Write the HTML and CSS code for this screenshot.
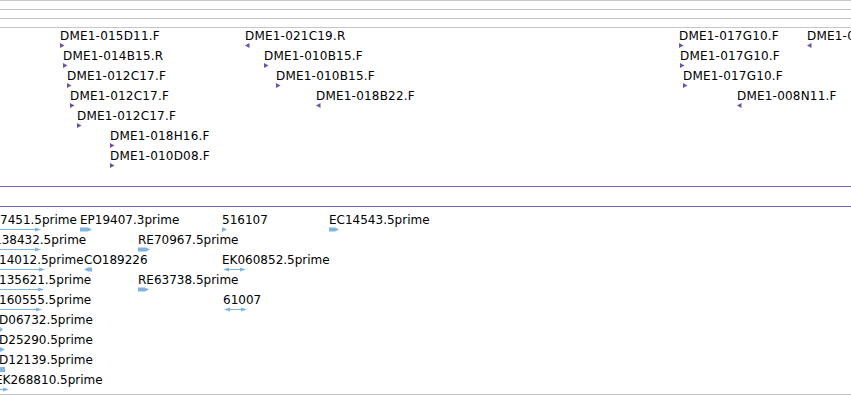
FILE: index.html
```html
<!DOCTYPE html>
<html lang="en">
<head>
    <meta charset="UTF-8">
    <meta name="viewport" content="width=device-width, initial-scale=1.0">
    <title>Feature Tracks</title>
    <link rel="stylesheet" href="styles.css">
</head>
<body>

<div class="ruler-row"></div>
<div class="ruler-row"></div>
<div class="ruler-row"></div>

<div id="clone-track" class="track track-upper"></div>
<div class="divider"></div>
<div id="est-track" class="track track-lower"></div>

<script>
    // Clone end reads: x = glyph start, dir 1 = forward, -1 = reverse
    const clones = [
        [ { x: 60, label: "DME1-015D11.F", dir: 1 }, { x: 245, label: "DME1-021C19.R", dir: -1 },
          { x: 679, label: "DME1-017G10.F", dir: 1 }, { x: 807, label: "DME1-026A04.R", dir: -1 } ],
        [ { x: 63, label: "DME1-014B15.R", dir: 1 }, { x: 264, label: "DME1-010B15.F", dir: 1 },
          { x: 680, label: "DME1-017G10.F", dir: 1 } ],
        [ { x: 67, label: "DME1-012C17.F", dir: 1 }, { x: 276, label: "DME1-010B15.F", dir: 1 },
          { x: 683, label: "DME1-017G10.F", dir: 1 } ],
        [ { x: 70, label: "DME1-012C17.F", dir: 1 }, { x: 316, label: "DME1-018B22.F", dir: -1 },
          { x: 737, label: "DME1-008N11.F", dir: -1 } ],
        [ { x: 77, label: "DME1-012C17.F", dir: 1 } ],
        [ { x: 110, label: "DME1-018H16.F", dir: 1 } ],
        [ { x: 110, label: "DME1-010D08.F", dir: 1 } ]
    ];

    // EST alignments: w = glyph width, lx = label offset from glyph start
    const ests = [
        [ { x: 0, w: 41, kind: "line", label: "7451.5prime", lx: 0 },
          { x: 80, w: 12, kind: "block", label: "EP19407.3prime", lx: 0 },
          { x: 222, w: 5, kind: "tip", label: "516107", lx: 0 },
          { x: 329, w: 10, kind: "block", label: "EC14543.5prime", lx: 0 } ],
        [ { x: 0, w: 41, kind: "line", label: "138432.5prime", lx: -6 },
          { x: 138, w: 12, kind: "block", label: "RE70967.5prime", lx: 0 } ],
        [ { x: 0, w: 45, kind: "line", label: "14012.5prime", lx: -1 },
          { x: 84, w: 8, kind: "blockrev", label: "CO189226", lx: 0 },
          { x: 223, w: 23, kind: "both", label: "EK060852.5prime", lx: -1 } ],
        [ { x: 0, w: 44, kind: "line", label: "135621.5prime", lx: -1 },
          { x: 138, w: 11, kind: "block", label: "RE63738.5prime", lx: 0 } ],
        [ { x: 0, w: 42, kind: "line", label: "160555.5prime", lx: -1 },
          { x: 224, w: 23, kind: "both", label: "61007", lx: -1 } ],
        [ { x: 0, w: 3, kind: "tip", label: "D06732.5prime", lx: -1 } ],
        [ { x: 0, w: 5, kind: "tip", label: "D25290.5prime", lx: -1 } ],
        [ { x: 0, w: 5, kind: "box", label: "D12139.5prime", lx: -1 } ],
        [ { x: 0, w: 9, kind: "line", label: "EK268810.5prime", lx: -5 } ]
    ];

    const SVG_NS = "http://www.w3.org/2000/svg";

    function makeSvg(w, h, shapes) {
        const svg = document.createElementNS(SVG_NS, "svg");
        svg.setAttribute("width", w);
        svg.setAttribute("height", h);
        svg.setAttribute("class", "glyph");
        shapes.forEach(s => {
            const el = document.createElementNS(SVG_NS, s[0]);
            Object.keys(s[1]).forEach(k => el.setAttribute(k, s[1][k]));
            svg.appendChild(el);
        });
        return svg;
    }

    // Shapes for the EST glyphs, all 5px tall
    function estShapes(kind, w) {
        if (kind === "line") {
            return [
                ["rect", { x: 0, y: 2, width: Math.max(w - 5, 0), height: 1 }],
                ["polygon", { points: `${w - 6},0.5 ${w},2.5 ${w - 6},4.5` }]
            ];
        }
        if (kind === "both") {
            return [
                ["rect", { x: 4, y: 2, width: w - 8, height: 1 }],
                ["polygon", { points: "0,2.5 6,0.5 6,4.5" }],
                ["polygon", { points: `${w - 6},0.5 ${w},2.5 ${w - 6},4.5` }]
            ];
        }
        if (kind === "block") {
            return [["polygon", { points: `0,0.5 ${w - 4},0.5 ${w},2.5 ${w - 4},4.5 0,4.5` }]];
        }
        if (kind === "blockrev") {
            return [["polygon", { points: `0,2.5 4,0.5 ${w},0.5 ${w},4.5 4,4.5` }]];
        }
        if (kind === "box") {
            return [["rect", { x: 0, y: 0, width: w, height: 5 }]];
        }
        return [["polygon", { points: `0,0 ${w},2.5 0,5` }]];
    }

    function addFeature(track, left, top, label, glyph, glyphLeft) {
        const feat = document.createElement("div");
        feat.className = "feature";
        feat.style.left = left + "px";
        feat.style.top = top + "px";

        const name = document.createElement("span");
        name.className = "feature-label";
        name.textContent = label;
        feat.appendChild(name);

        glyph.style.marginLeft = glyphLeft + "px";
        feat.appendChild(glyph);
        track.appendChild(feat);
    }

    function loadTracks() {
        const cloneTrack = document.getElementById("clone-track");
        clones.forEach((row, i) => {
            row.forEach(c => {
                const pts = c.dir > 0 ? "0,0 4.5,2.5 0,5" : "4.5,0 0,2.5 4.5,5";
                addFeature(cloneTrack, c.x, 1 + i * 20, c.label,
                    makeSvg(5, 5, [["polygon", { points: pts }]]), 0);
            });
        });

        const estTrack = document.getElementById("est-track");
        ests.forEach((row, i) => {
            row.forEach(e => {
                addFeature(estTrack, e.x + e.lx, 6 + i * 20, e.label,
                    makeSvg(e.w, 5, estShapes(e.kind, e.w)), -e.lx);
            });
        });
    }

    window.onload = loadTracks;
</script>

</body>
</html>
```

FILE: styles.css
```css
body {
    margin: 0;
    width: 851px;
    height: 395px;
    overflow: hidden;
    background-color: #fff;
    font-family: "DejaVu Sans", sans-serif;
    font-size: 12px;
    color: #000;
}
.ruler-row {
    height: 8px;
    border-top: 1px solid #c6c6c6; /* thin grey ruler lines */
}
.track {
    position: relative;
    overflow: hidden;
}
.track-upper {
    height: 158px;
    border-top: 1px solid #c6c6c6;
}
.track-lower {
    height: 187px;
    border-bottom: 1px solid #c6c6c6;
}
.divider {
    height: 19px;
    border-top: 1px solid #7b5fb8; /* purple track separator */
    border-bottom: 1px solid #7b5fb8;
}
.feature {
    position: absolute;
    display: flex;
    flex-direction: column;
    align-items: flex-start;
    white-space: nowrap;
}
.feature-label {
    display: block;
    height: 14px;
    line-height: 14px;
}
.track-upper .feature-label {
    letter-spacing: 0.2px; /* clone names run a little wider */
}
.glyph {
    display: block;
}
.track-upper .glyph {
    fill: #6c52a8; /* purple clone ends */
}
.track-lower .glyph {
    fill: #7fb5e0; /* light blue ESTs */
}
```
